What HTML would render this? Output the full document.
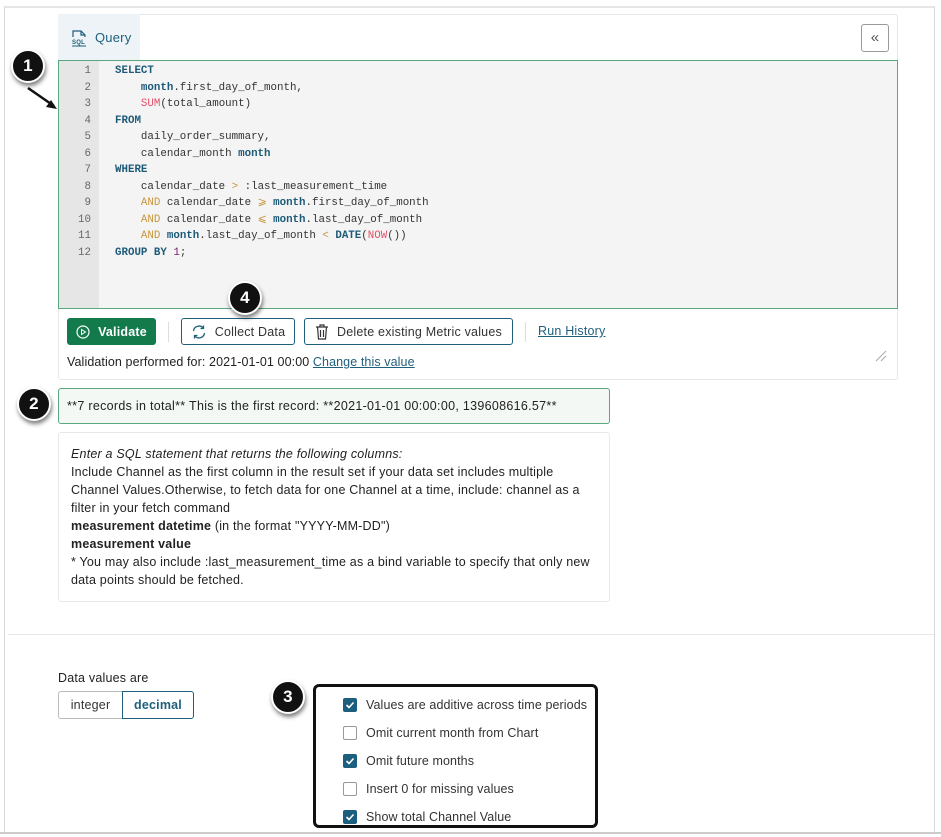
<!DOCTYPE html>
<html><head><style>
*{box-sizing:border-box;margin:0;padding:0}
body{width:941px;height:837px;background:#fff;font-family:"Liberation Sans",sans-serif;color:#222;position:relative;overflow:hidden;font-size:12.5px;letter-spacing:0.2px}
.a{position:absolute}
.code{font-family:"Liberation Mono",monospace;font-size:10.8px;line-height:16.5px;white-space:pre;color:#333;letter-spacing:0}
.k{color:#1c5a78;font-weight:bold}
.f{color:#e0506a}
.o{color:#c8963e}
.n{color:#7a1d6a}
.btn{position:absolute;border:1px solid #1f5f7c;border-radius:3px;height:27px;font-size:12.5px;display:flex;align-items:center;justify-content:center;color:#333;gap:8px}
.badge{position:absolute;width:34px;height:34px;border-radius:50%;background:#111;color:#fff;font-weight:bold;font-size:17px;display:flex;align-items:center;justify-content:center;border:2px solid #fff;box-shadow:1px 3px 4px rgba(0,0,0,.5)}
.cb{position:absolute;left:343px;width:14px;height:14px;border-radius:2px}
.cb.on{background:#1b5e7d}
.cb.off{border:1px solid #999;background:#fff}
.lbl{position:absolute;left:366px;font-size:12.5px;color:#333;letter-spacing:0.1px}
</style></head><body>
<div class="a" style="left:4px;top:6px;width:931px;height:827px;border:1px solid #d8d8d8;border-top:2px solid #e6e6e6"></div>
<div class="a" style="left:58px;top:14px;width:840px;height:366px;border:1px solid #e6e6e6;border-radius:3px"></div>
<div class="a" style="left:58px;top:14px;width:82px;height:46px;background:#edf3f6"></div>
<svg class="a" style="left:71px;top:29px" width="16" height="18" viewBox="0 0 16 18"><path d="M2 8V2h8l4 4v2M10 2v4h4" fill="none" stroke="#1f5f7c" stroke-width="1.2"/><text x="1" y="15" font-size="6" font-family="Liberation Sans" font-weight="bold" fill="#1f5f7c">SQL</text><path d="M1 17h14" stroke="#1f5f7c" stroke-width="1"/></svg>
<div class="a" style="left:95px;top:30px;font-size:13px;color:#1f5f7c">Query</div>
<div class="a" style="left:861px;top:24px;width:28px;height:28px;border:1px solid #999;border-radius:3px;text-align:center;line-height:25px;color:#555;font-size:15px">«</div>
<div class="a" style="left:58px;top:60px;width:840px;height:249px;background:#f4f4f4;border:1px solid #5aa882"></div>
<div class="a" style="left:59px;top:61px;width:40px;height:247px;background:#e6e6e6"></div>
<div class="a code" style="left:59px;top:63px;width:32px;text-align:right;color:#666">1
2
3
4
5
6
7
8
9
10
11
12</div>
<div class="a code" style="left:115px;top:63px"><span class="k">SELECT</span>
    <span class="k">month</span>.first_day_of_month,
    <span class="f">SUM</span>(total_amount)
<span class="k">FROM</span>
    daily_order_summary,
    calendar_month <span class="k">month</span>
<span class="k">WHERE</span>
    calendar_date <span class="o">&gt;</span> :last_measurement_time
    <span class="o">AND</span> calendar_date <span class="o">⩾</span> <span class="k">month</span>.first_day_of_month
    <span class="o">AND</span> calendar_date <span class="o">⩽</span> <span class="k">month</span>.last_day_of_month
    <span class="o">AND</span> <span class="k">month</span>.last_day_of_month <span class="o">&lt;</span> <span class="k">DATE</span>(<span class="f">NOW</span>())
<span class="k">GROUP BY</span> <span class="n">1</span>;</div>
<div class="btn" style="left:67px;top:318px;width:89px;background:#137a4b;border-color:#137a4b;color:#fff;font-weight:bold"><svg width="14" height="14"><circle cx="7" cy="7" r="6" fill="none" stroke="#fff" stroke-width="1.2"/><path d="M5.5 4.5v5l4-2.5z" fill="none" stroke="#fff"/></svg>Validate</div>
<div class="a" style="left:168px;top:322px;width:1px;height:20px;background:#ddd"></div>
<div class="btn" style="left:181px;top:318px;width:114px"><svg width="16" height="16" viewBox="0 0 16 16" fill="none" stroke="#1f5f7c" stroke-width="1.3"><path d="M2.5 7a5.5 5.5 0 0 1 10-2.5M13.5 9a5.5 5.5 0 0 1-10 2.5M12.5 1.5v3h-3M3.5 14.5v-3h3"/></svg>Collect Data</div>
<div class="btn" style="left:304px;top:318px;width:209px"><svg width="14" height="16" viewBox="0 0 14 16" fill="none" stroke="#333" stroke-width="1.2"><path d="M1 3h12M5 3V1h4v2M2.5 3l1 12h7l1-12M5.5 6v7M8.5 6v7"/></svg>Delete existing Metric values</div>
<div class="a" style="left:525px;top:322px;width:1px;height:20px;background:#ddd"></div>
<div class="a" style="left:538px;top:324px;color:#1f5f7c;text-decoration:underline">Run History</div>
<div class="a" style="left:67px;top:355px;letter-spacing:0.1px">Validation performed for: 2021-01-01 00:00 <span style="color:#1f5f7c;text-decoration:underline">Change this value</span></div>
<svg class="a" style="left:875px;top:350px" width="12" height="12"><path d="M1 11L11 1M6 11L11 6" stroke="#aaa"/></svg>
<div class="a" style="left:58px;top:388px;width:552px;height:36px;border:1px solid #5aa882;border-radius:3px;background:#f3f8f5;padding:10px 8px;font-size:12.5px;letter-spacing:0.3px;white-space:nowrap">**7 records in total** This is the first record: **2021-01-01 00:00:00, 139608616.57**</div>
<div class="a" style="left:58px;top:432px;width:552px;height:170px;border:1px solid #e8e8e8;border-radius:3px;padding:12px 0 12px 12px;line-height:18px;font-size:12.5px;white-space:nowrap;overflow:hidden"><i>Enter a SQL statement that returns the following columns:</i><br>Include Channel as the first column in the result set if your data set includes multiple<br>Channel Values.Otherwise, to fetch data for one Channel at a time, include: channel as a<br>filter in your fetch command<br><b>measurement datetime</b> (in the format "YYYY-MM-DD")<br><b>measurement value</b><br>* You may also include :last_measurement_time as a bind variable to specify that only new<br>data points should be fetched.</div>
<div class="a" style="left:8px;top:634px;width:926px;height:1px;background:#e6e6e6"></div>
<div class="a" style="left:58px;top:671px">Data values are</div>
<div class="a" style="left:58px;top:691px;width:65px;height:28px;border:1px solid #bbb;border-radius:3px 0 0 3px;text-align:center;line-height:26px;color:#333">integer</div>
<div class="a" style="left:122px;top:691px;width:72px;height:28px;border:1px solid #1f5f7c;border-radius:0 3px 3px 0;text-align:center;line-height:26px;color:#1f5f7c;font-weight:bold">decimal</div>
<div class="a" style="left:313px;top:684px;width:285px;height:144px;border:3px solid #111;border-radius:6px"></div>
<div class="cb on" style="top:698px"></div><div class="lbl" style="top:698px">Values are additive across time periods</div>
<div class="cb off" style="top:726px"></div><div class="lbl" style="top:726px">Omit current month from Chart</div>
<div class="cb on" style="top:754px"></div><div class="lbl" style="top:754px">Omit future months</div>
<div class="cb off" style="top:782px"></div><div class="lbl" style="top:782px">Insert 0 for missing values</div>
<div class="cb on" style="top:810px"></div><div class="lbl" style="top:810px">Show total Channel Value</div>
<svg class="a" style="left:343px;top:698px" width="14" height="130"><g fill="none" stroke="#fff" stroke-width="1.6"><path d="M3.5 7l2.5 2.5 4.5-5"/><path d="M3.5 63l2.5 2.5 4.5-5"/><path d="M3.5 119l2.5 2.5 4.5-5"/></g></svg>
<div class="a" style="left:0;top:832px;width:941px;height:2px;background:#ccc"></div>
<div class="badge" style="left:11px;top:49px">1</div>
<svg class="a" style="left:26px;top:86px" width="34" height="26"><path d="M2 2L28 20" stroke="#111" stroke-width="2.5"/><path d="M31 23l-11-2 5-7z" fill="#111"/></svg>
<div class="badge" style="left:17px;top:387px">2</div>
<div class="badge" style="left:271px;top:680px">3</div>
<div class="badge" style="left:228px;top:281px">4</div>
</body></html>
